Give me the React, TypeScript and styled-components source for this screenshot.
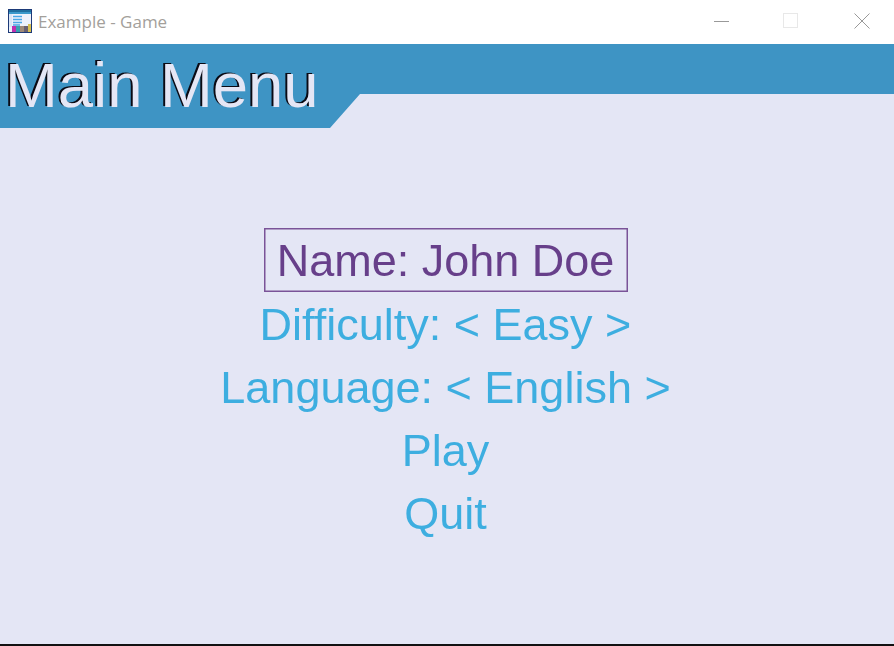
import React from 'react';
import styled, { createGlobalStyle } from 'styled-components';

const GlobalStyle = createGlobalStyle`
  html, body {
    margin: 0;
    padding: 0;
    background: #fff;
  }
`;

const Window = styled.div`
  width: 894px;
  height: 646px;
  display: flex;
  flex-direction: column;
  overflow: hidden;
  font-family: "Liberation Sans", Arial, sans-serif;
`;

const TitleBar = styled.div`
  height: 44px;
  flex: none;
  display: flex;
  align-items: center;
  background: #fff;
  padding: 0 24px 2px 8px;
  box-sizing: border-box;
`;

const AppTitle = styled.span`
  margin-left: 6px;
  flex: 1;
  font-family: "Open Sans", sans-serif;
  font-size: 17px;
  color: #a39f9b;
`;

const Controls = styled.div`
  display: flex;
  align-items: center;
  gap: 52px;
`;

const WindowIcon = styled.svg<{ $shift?: number }>`
  display: block;
  width: 16px;
  height: 16px;
  margin-left: ${(p) => p.$shift ?? 0}px;
`;

const Content = styled.main`
  flex: 1;
  display: flex;
  flex-direction: column;
  background: #e4e6f5;
  border-bottom: 2px solid #111;
`;

const Banner = styled.header`
  height: 84px;
  flex: none;
  background: #3e94c4;
  clip-path: polygon(0 0, 100% 0, 100% 50px, 360px 50px, 330px 84px, 0 84px);
`;

const Heading = styled.h1`
  margin: 0;
  padding-left: 5px;
  font-size: 63.4px;
  font-weight: 400;
  line-height: 82px;
  color: #e4e6f5;
  text-shadow: -2px -1px 0 #0a0a14;
  filter: blur(0.4px);
`;

const Menu = styled.nav`
  flex: 1;
  display: flex;
  flex-direction: column;
  align-items: center;
  justify-content: center;
  padding-right: 2px;
`;

const MenuItem = styled.div<{ $selected?: boolean }>`
  height: ${(p) => (p.$selected ? 64 : 63)}px;
  box-sizing: border-box;
  display: flex;
  align-items: center;
  padding: ${(p) => (p.$selected ? '2px 14px 0 13px' : '3px 13px 0 12px')};
  font-size: 45px;
  white-space: nowrap;
  color: ${(p) => (p.$selected ? '#673f8a' : '#3daee0')};
  box-shadow: ${(p) => (p.$selected ? 'inset 0 0 0 1.5px #7a5398' : 'none')};
  filter: blur(0.3px);
`;

const GameIcon = () => (
  <svg width="24" height="24" viewBox="0 0 24 24" style={{ flex: 'none' }}>
    <rect x="0.5" y="0.5" width="23" height="23" fill="#eef2fb" stroke="#1d3a78" />
    <rect x="1" y="1" width="22" height="2" fill="#1f6f9f" />
    <rect x="1" y="3" width="22" height="2" fill="#3b9acb" />
    <rect x="1" y="5" width="3" height="13" fill="#dbe6f6" />
    <path d="M5 7.5h9M5 10.5h9M5 13.5h9M5 16h7" stroke="#4aa8e6" strokeWidth="1.4" />
    <rect x="4" y="17" width="4" height="6" fill="#c02fb0" />
    <rect x="8" y="17" width="4" height="6" fill="#3a9fb0" />
    <rect x="12" y="17" width="4" height="6" fill="#a08a78" />
    <rect x="16" y="17" width="4" height="6" fill="#6a6070" />
    <rect x="20" y="15" width="3" height="8" fill="#d8c050" />
  </svg>
);

const menuItems = ['Name: John Doe', 'Difficulty: < Easy >', 'Language: < English >', 'Play', 'Quit'];

const App: React.FC = () => {
  return (
    <Window>
      <GlobalStyle />
      <TitleBar>
        <GameIcon />
        <AppTitle>Example - Game</AppTitle>
        <Controls>
          <WindowIcon viewBox="0 0 16 16">
            <path d="M0 8.5h15" stroke="#999" fill="none" />
          </WindowIcon>
          <WindowIcon viewBox="0 0 16 16">
            <rect x="1.5" y="0.5" width="14" height="14" stroke="#e8e8e8" fill="none" />
          </WindowIcon>
          <WindowIcon viewBox="0 0 16 16" $shift={4}>
            <path d="M0.5 0.5l15 15M15.5 0.5l-15 15" stroke="#999" fill="none" />
          </WindowIcon>
        </Controls>
      </TitleBar>
      <Content>
        <Banner>
          <Heading>Main Menu</Heading>
        </Banner>
        <Menu>
          {menuItems.map((item, index) => (
            <MenuItem key={item} $selected={index === 0}>
              {item}
            </MenuItem>
          ))}
        </Menu>
      </Content>
    </Window>
  );
};

export default App;
